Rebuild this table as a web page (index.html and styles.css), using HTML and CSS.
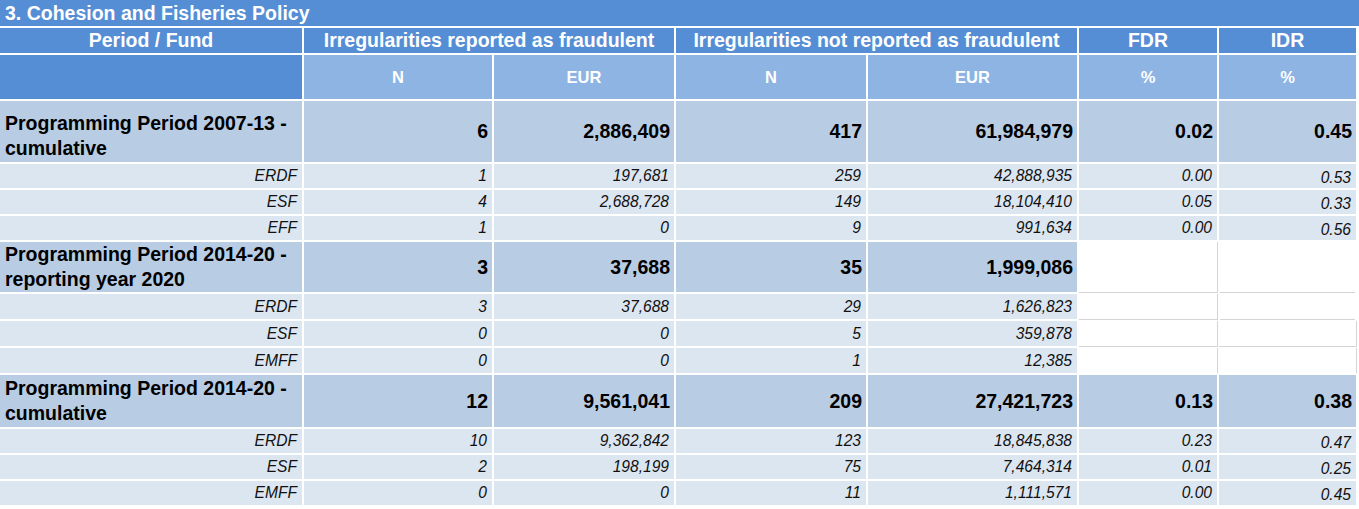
FILE: index.html
```html
<!DOCTYPE html>
<html lang="en">
<head>
<meta charset="utf-8">
<title>Cohesion and Fisheries Policy</title>
<link rel="stylesheet" href="styles.css">
</head>
<body>
<div class="sheet">
  <div class="title">3. Cohesion and Fisheries Policy</div>

  <div class="h1 c1">Period / Fund</div>
  <div class="h1 span2">Irregularities reported as fraudulent</div>
  <div class="h1 span2">Irregularities not reported as fraudulent</div>
  <div class="h1">FDR</div>
  <div class="h1">IDR</div>

  <div class="h2 dark"></div>
  <div class="h2">N</div>
  <div class="h2">EUR</div>
  <div class="h2">N</div>
  <div class="h2">EUR</div>
  <div class="h2">%</div>
  <div class="h2">%</div>

  <div class="pl pl-low">Programming Period 2007-13 -<br>cumulative</div>
  <div class="pv">6</div>
  <div class="pv">2,886,409</div>
  <div class="pv">417</div>
  <div class="pv">61,984,979</div>
  <div class="pv">0.02</div>
  <div class="pv">0.45</div>

  <div class="sl">ERDF</div><div class="sv">1</div><div class="sv">197,681</div><div class="sv">259</div><div class="sv">42,888,935</div><div class="sv">0.00</div><div class="sv low">0.53</div>
  <div class="sl">ESF</div><div class="sv">4</div><div class="sv">2,688,728</div><div class="sv">149</div><div class="sv">18,104,410</div><div class="sv">0.05</div><div class="sv low">0.33</div>
  <div class="sl">EFF</div><div class="sv">1</div><div class="sv">0</div><div class="sv">9</div><div class="sv">991,634</div><div class="sv">0.00</div><div class="sv low">0.56</div>

  <div class="pl">Programming Period 2014-20 -<br>reporting year 2020</div>
  <div class="pv">3</div>
  <div class="pv">37,688</div>
  <div class="pv">35</div>
  <div class="pv">1,999,086</div>
  <div class="empty line-b line-r"></div>
  <div class="empty line-b"></div>

  <div class="sl">ERDF</div><div class="sv">3</div><div class="sv">37,688</div><div class="sv">29</div><div class="sv">1,626,823</div><div class="empty line-b line-r"></div><div class="empty line-b"></div>
  <div class="sl">ESF</div><div class="sv">0</div><div class="sv">0</div><div class="sv">5</div><div class="sv">359,878</div><div class="empty line-b line-r"></div><div class="empty line-b line-end"></div>
  <div class="sl">EMFF</div><div class="sv">0</div><div class="sv">0</div><div class="sv">1</div><div class="sv">12,385</div><div class="empty line-r"></div><div class="empty line-end"></div>

  <div class="pl">Programming Period 2014-20 -<br>cumulative</div>
  <div class="pv">12</div>
  <div class="pv">9,561,041</div>
  <div class="pv">209</div>
  <div class="pv">27,421,723</div>
  <div class="pv">0.13</div>
  <div class="pv">0.38</div>

  <div class="sl">ERDF</div><div class="sv">10</div><div class="sv">9,362,842</div><div class="sv">123</div><div class="sv">18,845,838</div><div class="sv">0.23</div><div class="sv low">0.47</div>
  <div class="sl">ESF</div><div class="sv">2</div><div class="sv">198,199</div><div class="sv">75</div><div class="sv">7,464,314</div><div class="sv">0.01</div><div class="sv low">0.25</div>
  <div class="sl">EMFF</div><div class="sv">0</div><div class="sv">0</div><div class="sv">11</div><div class="sv">1,111,571</div><div class="sv">0.00</div><div class="sv low">0.45</div>
</div>
</body>
</html>
```

FILE: styles.css
```css
html, body {
  margin: 0;
  padding: 0;
  background: #ffffff;
}

body {
  font-family: "Liberation Sans", Arial, sans-serif;
  width: 1359px;
  height: 509px;
  overflow: hidden;
}

.sheet {
  display: grid;
  width: 1356px;
  grid-template-columns: 302px 188px 180px 190px 209px 138px 137px;
  grid-template-rows: 26px 25px 44px 61px 24px 24px 24px 50px 25px 25px 25px 52px 24px 24px 24px;
  gap: 2px;
}

.title {
  grid-column: 1 / -1;
  margin-right: -3px;
  background: #558ed5;
  color: #ffffff;
  font-weight: bold;
  font-size: 19.5px;
  line-height: 26px;
  padding-left: 5px;
  white-space: nowrap;
}

.h1 {
  background: #558ed5;
  color: #ffffff;
  font-weight: bold;
  font-size: 19.5px;
  line-height: 25px;
  text-align: center;
  white-space: nowrap;
}

.span2 {
  grid-column: span 2;
}

.h2 {
  background: #8db4e2;
  color: #ffffff;
  font-weight: bold;
  font-size: 16.5px;
  display: flex;
  align-items: center;
  justify-content: center;
}

.h2.dark {
  background: #558ed5;
}

.pl {
  background: #b8cce4;
  color: #000000;
  font-weight: bold;
  font-size: 19.5px;
  line-height: 25px;
  padding-left: 5px;
  display: flex;
  align-items: center;
  white-space: nowrap;
}

.pl-low {
  align-items: flex-end;
  padding-bottom: 1px;
}

.pv {
  background: #b8cce4;
  color: #000000;
  font-weight: bold;
  font-size: 19.5px;
  display: flex;
  align-items: center;
  justify-content: flex-end;
  padding-right: 4px;
}

.sl,
.sv {
  background: #dce6f1;
  color: #111111;
  font-style: italic;
  font-size: 15.6px;
  display: flex;
  align-items: center;
  justify-content: flex-end;
  padding-right: 5px;
}

.sv.low {
  padding-top: 4px;
}

.empty {
  background: #ffffff;
}

.line-b {
  box-shadow: 0 2px 0 -1px #d4d4d4;
}

.line-r {
  box-shadow: 1px 0 0 0 #d4d4d4, 0 1px 0 0 transparent;
}

.line-b.line-r {
  box-shadow: 0 1px 0 0 #d4d4d4, 1px 0 0 0 #d4d4d4, 1px 1px 0 0 #d4d4d4;
}

.line-b.line-end {
  box-shadow: 0 1px 0 0 #d4d4d4, 1px 0 0 0 #d4d4d4, 1px 1px 0 0 #d4d4d4;
}

.line-end {
  box-shadow: 1px 0 0 0 #d4d4d4;
}
```
